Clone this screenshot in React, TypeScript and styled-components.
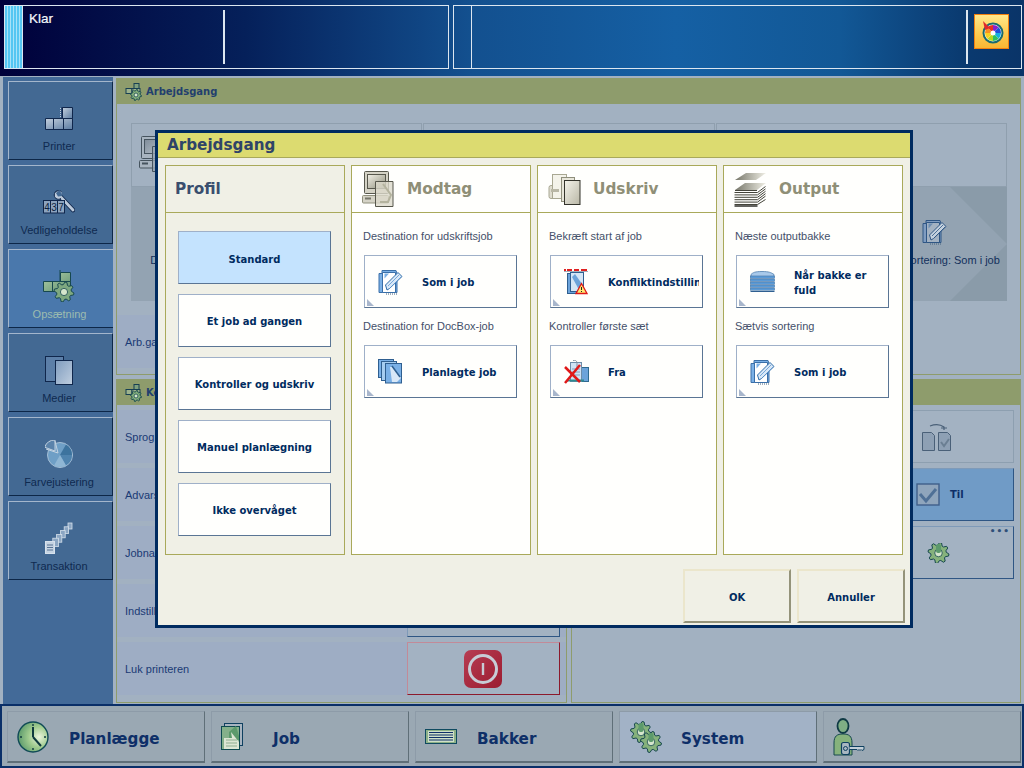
import React from "react";
import styled, {createGlobalStyle} from "styled-components";

const GlobalStyle = createGlobalStyle`
	html, body {
		margin: 0;
		padding: 0;
		background: #a2b1c1;
	}
	* {
		box-sizing: border-box;
	}
`

const REGULAR = `"Liberation Sans", Arial, sans-serif`
const BOLD = `"DejaVu Sans", Verdana, sans-serif`

const Screen = styled.div`
	position: relative;
	width: 1024px;
	height: 768px;
	overflow: hidden;
	display: flex;
	flex-direction: column;
	background: #a2b1c1;
	font-family: ${REGULAR};
`

/* top status bar */
const TopBar = styled.div`
	height: 76px;
	flex: none;
	display: flex;
	gap: 4px;
	padding: 5px 2px 7px 4px;
	background: linear-gradient(90deg, #00003a 0%, #05205a 24%, #13508f 46%, #1560a4 66%, #125896 82%, #0a3a70 94%, #0a3468 100%);
`
const StatusBox = styled.div<{$width: number}>`
	width: ${props => props.$width}px;
	display: flex;
	align-items: stretch;
	border: 1px solid #dce6f0;
`
const Stripe = styled.div`
	width: 18px;
	flex: none;
	background: repeating-linear-gradient(90deg, #55c6f2 0, #55c6f2 2px, #a8e2f8 2px, #a8e2f8 3px);
	border-right: 1px solid #dce6f0;
`
const StatusText = styled.div`
	width: 200px;
	flex: none;
	padding: 5px 0 0 6px;
	font-size: 13.5px;
	line-height: 16px;
	color: #f4f8fc;
	-webkit-text-stroke: 0.2px #f4f8fc;
`
const StatusDivider = styled.div`
	width: 2px;
	flex: none;
	margin: 4px 0;
	background: #dce6f0;
`
const StatusCell = styled.div`
	width: 18px;
	flex: none;
	border-right: 1px solid #dce6f0;
`
const StatusFill = styled.div`
	flex: 1;
`
const WheelButton = styled.div`
	width: 35px;
	height: 35px;
	margin: 8px 12px 0 6px;
	flex: none;
	display: flex;
	align-items: center;
	justify-content: center;
	border: 1px solid #f2800f;
	background: linear-gradient(180deg, #ffe88a 0%, #fdc94e 60%, #f9b634 100%);
`

/* main area */
const Main = styled.div`
	height: 628px;
	flex: none;
	display: flex;
	padding-left: 3px;
`
const Sidebar = styled.div`
	width: 110px;
	flex: none;
	margin-top: 1px;
	display: flex;
	flex-direction: column;
	gap: 5px;
	padding: 4px 0 0 5px;
	background: #436a98;
`
const SideButton = styled.div<{$active?: boolean}>`
	width: 105px;
	height: 79px;
	flex: none;
	display: flex;
	flex-direction: column;
	align-items: center;
	padding: 15px 3px 0 0;
	background: ${props => props.$active ? "#4a78ac" : "#436993"};
	border-top: 1px solid #a4b6cc;
	border-left: 1px solid #a4b6cc;
	border-bottom: 1px solid #0d2748;
	border-right: ${props => props.$active ? "0" : "1px solid #0d2748"};
`
const SideIcon = styled.div`
	height: 42px;
	display: flex;
	align-items: center;
	justify-content: center;
`
const SideLabel = styled.div<{$active?: boolean}>`
	font-size: 11px;
	line-height: 14px;
	color: ${props => props.$active ? "#9dbcaf" : "#0f2a50"};
`

const Content = styled.div`
	flex: 1;
	display: flex;
	flex-direction: column;
	gap: 4px;
	padding: 2px 3px 1px 3px;
`
const Panel = styled.div<{$height?: number}>`
	${props => props.$height ? `height: ${props.$height}px; flex: none;` : "flex: 1;"}
	min-width: 0;
	border: 1px solid #8e9c6c;
	display: flex;
	flex-direction: column;
`
const PanelHeader = styled.div`
	height: 25px;
	flex: none;
	display: flex;
	align-items: center;
	gap: 3px;
	padding-left: 8px;
	background: #8e9c6c;
	font-family: ${BOLD};
	font-weight: 700;
	font-size: 10px;
	color: #223f6e;
`
const CardRow = styled.div`
	display: flex;
	gap: 1px;
	margin: 19px 13px 0 14px;
`
const Card = styled.div`
	flex: 1;
	height: 178px;
	display: flex;
	flex-direction: column;
`
const CardTop = styled.div`
	height: 64px;
	flex: none;
	padding: 12px 0 0 7px;
	border: 1px solid #8f9fae;
`
const CardBottom = styled.div<{$arrow?: boolean}>`
	position: relative;
	flex: 1;
	display: grid;
	grid-template-columns: 1fr 1fr;
	background: #93a3b2;

	${props => props.$arrow ? `
	&::before {
		content: "";
		position: absolute;
		top: 0;
		right: 0;
		bottom: 0;
		width: 57px;
		background: #8a9ba9;
		clip-path: polygon(0 0, 100% 0, 100% 50%, 100% 100%, 0 100%, 100% 50%);
	}` : ""}
`
const CardItem = styled.div<{$col: number}>`
	position: relative;
	grid-column: ${props => props.$col};
	display: flex;
	flex-direction: column;
	align-items: center;
	padding-top: 32px;
	font-size: 11px;
	line-height: 14px;
	color: #12305c;
	white-space: nowrap;
`
const CardIcon = styled.div`
	height: 34px;
`
const WideRow = styled.div`
	width: 450px;
	height: 53px;
	margin-top: 14px;
	display: flex;
	align-items: center;
	padding-left: 8px;
	background: #9eadc4;
	font-size: 11px;
	color: #1a3a74;
`
const BottomRow = styled.div`
	flex: 1;
	display: flex;
	gap: 4px;
`
const Rows = styled.div`
	display: flex;
	flex-direction: column;
	gap: 5px;
	padding-top: 5px;
`
const SettingRow = styled.div`
	height: 53px;
	display: flex;
	align-items: center;
	justify-content: space-between;
	padding: 0 6px 0 8px;
	background: #9eadc4;
	font-size: 11px;
	color: #1a3a74;
`
const PlainRow = styled.div`
	height: 53px;
	display: flex;
	justify-content: flex-end;
	padding-right: 6px;
`
const Value = styled.div<{$kind?: "blue" | "red" | "dim", $pad?: number}>`
	position: relative;
	width: 153px;
	height: 53px;
	display: flex;
	align-items: center;
	justify-content: ${props => props.$kind === "red" ? "center" : "flex-start"};
	padding-left: ${props => props.$pad ?? 0}px;
	gap: 10px;
	font-family: ${BOLD};
	font-weight: 700;
	font-size: 10px;
	color: #0e2f68;
	background: ${props => props.$kind === "blue" ? "#709bc6" : "#a3b2c2"};
	border: 1px solid ${props => props.$kind === "red" ? "#c28a98" : props.$kind === "dim" ? "#8d9fb0" : "#7f9ab8"};
	border-right-color: ${props => props.$kind === "red" ? "#8c1a2c" : props.$kind === "dim" ? "#8d9fb0" : "#2f5684"};
	border-bottom-color: ${props => props.$kind === "red" ? "#8c1a2c" : props.$kind === "dim" ? "#8d9fb0" : "#2f5684"};
`
const Dots = styled.div`
	position: absolute;
	top: 2px;
	right: 3px;
	font-size: 9px;
	line-height: 4px;
	letter-spacing: 1px;
	color: #2f4f78;
`

/* bottom navigation */
const Nav = styled.div`
	height: 64px;
	flex: none;
	display: flex;
	gap: 6px;
	padding: 5px 1px 3px 5px;
	border: 2px solid #0a2f68;
	background: #9aa8b3;
`
const NavTab = styled.div<{$active?: boolean}>`
	width: 198px;
	height: 52px;
	flex: none;
	display: flex;
	align-items: center;
	padding-left: 9px;
	font-family: ${BOLD};
	font-weight: 700;
	font-size: 15.2px;
	color: #0e2f68;
	background: ${props => props.$active ? "#a2b2c6" : "#9aa8b3"};
	border: 1px solid #8d9ba8;
	border-right-color: #5f6f78;
	border-bottom: 2px solid #5f6f78;
`
const NavLabel = styled.span`
	padding-top: 4px;
`
const NavIcon = styled.div`
	width: 52px;
	flex: none;
	display: flex;
	align-items: center;
`

/* dialog */
const Dialog = styled.div`
	position: absolute;
	z-index: 2;
	left: 155px;
	top: 130px;
	width: 758px;
	height: 498px;
	border: 3px solid #002b60;
	background: #f0f0e6;
	display: flex;
	flex-direction: column;
`
const DialogTitle = styled.div`
	height: 25px;
	flex: none;
	padding-left: 9px;
	background: #dcdb70;
	border-bottom: 1px solid #a9a95a;
	font-family: ${BOLD};
	font-weight: 700;
	font-size: 15.2px;
	line-height: 24px;
	color: #2f4468;
`
const Columns = styled.div`
	display: flex;
	gap: 6px;
	padding: 7px 0 0 7px;
`
const Column = styled.div<{$tinted?: boolean}>`
	width: 180px;
	height: 390px;
	flex: none;
	border: 1px solid #a9a95a;
	background: ${props => props.$tinted ? "#f0f0e6" : "#fffffd"};
`
const ColumnHead = styled.div<{$tinted?: boolean}>`
	height: 47px;
	display: flex;
	align-items: center;
	padding-left: ${props => props.$tinted ? 9 : 10}px;
	border-bottom: 1px solid #a9a95a;
	font-family: ${BOLD};
	font-weight: 700;
	font-size: 15.3px;
	color: ${props => props.$tinted ? "#3a4e6e" : "#8f8f77"};
`
const HeadIcon = styled.div`
	width: 45px;
	flex: none;
	display: flex;
	align-items: center;
`
const ProfileList = styled.div`
	display: flex;
	flex-direction: column;
	gap: 10px;
	padding: 18px 0 0 12px;
`
const ProfileButton = styled.div<{$selected?: boolean}>`
	width: 153px;
	height: 53px;
	display: flex;
	align-items: center;
	justify-content: center;
	padding-top: ${props => props.$selected ? 4 : 2}px;
	font-family: ${BOLD};
	font-weight: 700;
	font-size: 10px;
	color: #002b60;
	background: ${props => props.$selected ? "#c4e3fe" : "#fffffd"};
	border: 1px solid #9fb0c8;
	border-right-color: #5a7594;
	border-bottom-color: #5a7594;
`
const Fields = styled.div`
	padding: 16px 0 0 11px;
`
const FieldLabel = styled.div`
	font-size: 11px;
	line-height: 14px;
	color: #44506a;
	margin-bottom: 12px;
`
const FieldButton = styled.div`
	position: relative;
	width: 153px;
	height: 53px;
	margin: 0 0 11px 1px;
	display: flex;
	align-items: center;
	padding-left: 13px;
	background: #fffffd;
	border: 1px solid #9fb0c8;
	border-right-color: #5a7594;
	border-bottom-color: #5a7594;

	&::after {
		content: "";
		position: absolute;
		left: 2px;
		bottom: 1px;
		width: 7px;
		height: 7px;
		background: #a8b6cc;
		clip-path: polygon(0 0, 100% 100%, 0 100%);
	}
`
const FieldIcon = styled.div`
	width: 44px;
	flex: none;
	display: flex;
	align-items: center;
`
const FieldValue = styled.div`
	width: 91px;
	flex: none;
	overflow: hidden;
	padding-top: 2px;
	font-family: ${BOLD};
	font-weight: 700;
	font-size: 10px;
	line-height: 15px;
	color: #002b60;
`
const Footer = styled.div`
	display: flex;
	justify-content: flex-end;
	gap: 6px;
	padding: 14px 5px 0 0;
`
const FooterButton = styled.div`
	width: 108px;
	height: 54px;
	display: flex;
	align-items: center;
	justify-content: center;
	padding-top: 2px;
	font-family: ${BOLD};
	font-weight: 700;
	font-size: 10px;
	color: #002b60;
	background: #f0f0e6;
	border: 2px solid #ebe6cc;
	border-right-color: #94937a;
	border-bottom-color: #94937a;
`

/* icon helpers */
const gearPath = (cx: number, cy: number, r: number, teeth: number) => {
	const points: string[] = []
	const steps = teeth * 4
	for (let i = 0; i < steps; i++) {
		const angle = (i + 0.5) / steps * Math.PI * 2
		const radius = i % 4 < 2 ? r : r * 0.74
		points.push(`${(cx + Math.cos(angle) * radius).toFixed(2)} ${(cy + Math.sin(angle) * radius).toFixed(2)}`)
	}
	return `M${points.join("L")}Z`
}
const wedge = (cx: number, cy: number, r: number, from: number, to: number) => {
	const a = (from - 90) * Math.PI / 180
	const b = (to - 90) * Math.PI / 180
	return `M${cx} ${cy}L${(cx + Math.cos(a) * r).toFixed(2)} ${(cy + Math.sin(a) * r).toFixed(2)}A${r} ${r} 0 0 1 ${(cx + Math.cos(b) * r).toFixed(2)} ${(cy + Math.sin(b) * r).toFixed(2)}Z`
}

const Gear = ({cx, cy, r, fill = "#86b27c", stroke = "#17484f"}: {cx: number, cy: number, r: number, fill?: string, stroke?: string}) => (
	<g>
		<path d={gearPath(cx, cy, r, 8)} fill={fill} stroke={stroke} strokeWidth="1"/>
		<circle cx={cx} cy={cy} r={r * 0.36} fill="#d6e6cc" stroke={stroke} strokeWidth="0.8"/>
	</g>
)

const WorkflowIcon = () => (
	<svg width="18" height="18" viewBox="0 0 18 18">
		<rect x="9" y="0.5" width="5" height="5" fill="#7fa07e" stroke="#173f52"/>
		<rect x="1" y="5.5" width="6" height="5" fill="#9db28c" stroke="#173f52"/>
		<rect x="7" y="5.5" width="8" height="5" fill="#9db28c" stroke="#173f52"/>
		<Gear cx={11} cy={12} r={5.5}/>
	</svg>
)
const PrinterIcon = () => (
	<svg width="28" height="23" viewBox="0 0 28 23">
		<defs>
			<linearGradient id="pblock" x1="0" y1="0" x2="1" y2="1">
				<stop offset="0" stopColor="#c4d0de"/>
				<stop offset="1" stopColor="#5c7ca2"/>
			</linearGradient>
		</defs>
		<path d="M0.5 11.5h27v11h-27z" fill="url(#pblock)" stroke="#10274c"/>
		<path d="M17.5 0.5h10v11h-10z" fill="url(#pblock)" stroke="#10274c"/>
		<path d="M8.5 11.5v11M18.5 11.5v11M17 0v11" stroke="#10274c" fill="none"/>
		<path d="M15.5 1v9" stroke="#c4d0de" strokeDasharray="1 1"/>
	</svg>
)
const MaintenanceIcon = () => (
	<svg width="32" height="24" viewBox="0 0 32 24">
		<path d="M14 3L30 20" stroke="#10274c" strokeWidth="4.600" strokeLinecap="round"/>
		<path d="M14 3L30 20" stroke="#bccadb" strokeWidth="2.800" strokeLinecap="round"/>
		<path d="M18.500 1.500c-2.500-1.500-6-.5-7 2-.7 2 0 4 1.500 5 1.500 1 3.500 1 5 0" fill="#bccadb" stroke="#10274c" strokeWidth="1"/>
		<path d="M17 0l-4 3 2 3.500 4-.5z" fill="#436993"/>
		<rect x="0.500" y="10.500" width="21" height="12.500" fill="#8da4bf" stroke="#10274c"/>
		<path d="M7.500 10.500v12.500M14.500 10.500v12.500" stroke="#10274c"/>
		<text x="1.300" y="20.500" fontFamily={REGULAR} fontSize="10" fill="#0b1f40">4</text>
		<text x="8.300" y="20.500" fontFamily={REGULAR} fontSize="10" fill="#0b1f40">3</text>
		<text x="15.300" y="20.500" fontFamily={REGULAR} fontSize="10" fill="#0b1f40">7</text>
	</svg>
)
const SetupIcon = () => (
	<svg width="33" height="32" viewBox="0 0 33 32">
		<defs>
			<linearGradient id="sblock" x1="0" y1="0" x2="1" y2="1">
				<stop offset="0" stopColor="#b4d0a8"/>
				<stop offset="1" stopColor="#5d9070"/>
			</linearGradient>
		</defs>
		<path d="M0.500 11.500h27v10h-27zM17.500 2.500h10v9h-10z" fill="url(#sblock)" stroke="#17484f"/>
		<path d="M17 0v12M9.500 11.500v10" stroke="#17484f"/>
		<Gear cx={21} cy={22} r={10} fill="#7ea880"/>
	</svg>
)
const MediaIcon = () => (
	<svg width="29" height="29" viewBox="0 0 29 29">
		<defs>
			<linearGradient id="mblock" x1="0" y1="0" x2="1" y2="1">
				<stop offset="0" stopColor="#7f9cbe"/>
				<stop offset="1" stopColor="#c0cfe0"/>
			</linearGradient>
		</defs>
		<rect x="0.500" y="0.500" width="18" height="25" fill="#5c7fa8" stroke="#10274c"/>
		<rect x="10.500" y="4.500" width="17" height="24" fill="url(#mblock)" stroke="#10274c"/>
	</svg>
)
const AdjustIcon = () => (
	<svg width="28" height="28" viewBox="0 0 28 28">
		<circle cx="15" cy="15" r="12.500" fill="#6f9fc6" stroke="#a6bfd6"/>
		<path d={wedge(15, 15, 12, 90, 150)} fill="#4f83ae"/>
		<path d={wedge(15, 15, 12, 150, 210)} fill="#8fb6d4"/>
		<path d={wedge(15, 15, 12, 30, 90)} fill="#3d739e"/>
		<path d={wedge(11, 12, 11, 290, 360)} transform="translate(-1 -1)" fill="#5b83ab" stroke="#c3d2e0"/>
		<path d="M13 13L1 9M13 13L10 1" stroke="#c3d2e0" fill="none"/>
	</svg>
)
const TransactionIcon = () => (
	<svg width="28" height="32" viewBox="0 0 28 32">
		{[0, 1, 2, 3, 4].map(i => (
			<rect key={i} x={23 - i * 3.8} y={1 + i * 3.8} width={4 + i * 0.4} height={6 + i * 0.6} fill="#8ba6c3" stroke="#d6e1ec" strokeWidth="0.8"/>
		))}
		<rect x="0.500" y="19.500" width="9" height="12" fill="#c5d3e2" stroke="#d6e1ec"/>
		<path d="M2 23h6M2 25.500h6M2 28h6" stroke="#3b5a80" strokeWidth="0.8"/>
	</svg>
)
const PcIcon = ({dim}: {dim?: boolean}) => (
	<svg width="33" height="36" viewBox="0 0 33 36">
		<defs>
			<linearGradient id={dim ? "pcd" : "pc"} x1="0" y1="0" x2="1" y2="1">
				<stop offset="0" stopColor={dim ? "#7f8c99" : "#f2f0e6"}/>
				<stop offset="1" stopColor={dim ? "#b5c0ca" : "#8f8f7c"}/>
			</linearGradient>
		</defs>
		<rect x="2.500" y="0.500" width="24" height="22" rx="1" fill={dim ? "#a8b4c0" : "#d5d3c6"} stroke={dim ? "#46545f" : "#57574c"}/>
		<rect x="5.500" y="3.500" width="18" height="14" fill={`url(#${dim ? "pcd" : "pc"})`} stroke={dim ? "#46545f" : "#57574c"}/>
		<rect x="0.500" y="24.500" width="26" height="7.500" rx="1" fill={dim ? "#a8b4c0" : "#d5d3c6"} stroke={dim ? "#46545f" : "#8f8f7c"}/>
		<rect x="3" y="26.500" width="6" height="2" fill={dim ? "#46545f" : "#77776a"}/>
		<path d="M13.500 10.500h17.500v25h-17.500z" fill={dim ? "#97a5b2" : "#dcdaca"} fillOpacity="0.8" stroke={dim ? "#46545f" : "#57574c"}/>
		<path d="M21 13l8 11-3 7h-8" fill="none" stroke={dim ? "#7c8a96" : "#b4b39e"} strokeWidth="2"/>
	</svg>
)
const PrintIcon = () => (
	<svg width="33" height="31" viewBox="0 0 33 31">
		<defs>
			<linearGradient id="prn" x1="0" y1="0" x2="1" y2="1">
				<stop offset="0" stopColor="#f4f3ea"/>
				<stop offset="1" stopColor="#b9b7a6"/>
			</linearGradient>
		</defs>
		<rect x="1" y="11.500" width="14" height="13" rx="2" fill="#dfddd0" stroke="#a9a893"/>
		<rect x="4.500" y="0.500" width="14" height="24" fill="#f4f3ea" stroke="#a9a893"/>
		<rect x="13.500" y="3.500" width="13" height="24" fill="#e8e6da" stroke="#8f8f7c"/>
		<rect x="16.500" y="6.500" width="15.500" height="24" fill="url(#prn)" stroke="#33332b"/>
		<rect x="3" y="15" width="8" height="3" fill="#b9b7a6"/>
	</svg>
)
const OutputIcon = () => (
	<svg width="33" height="35" viewBox="0 0 33 35">
		<defs>
			<linearGradient id="outp" x1="0" y1="0" x2="1" y2="0">
				<stop offset="0" stopColor="#77776a"/>
				<stop offset="1" stopColor="#f0efe5"/>
			</linearGradient>
		</defs>
		<path d="M1 8L12 1h20L22 8z" fill="url(#outp)"/>
		<path d="M1 18l10-7h21l-9 7z" fill="url(#outp)"/>
		<path d="M1 18.500h22" stroke="#44443a"/>
		{[0, 1, 2, 3, 4, 5].map(i => (
			<path key={i} d={`M0.500 ${20.500 + i * 2.400}h23l8-${i === 5 ? 5 : 6}`} fill="none" stroke="#44443a" strokeWidth="1"/>
		))}
		<path d="M0.500 34h23" stroke="#22221c" strokeWidth="1.400"/>
	</svg>
)
const PencilDoc = ({dim}: {dim?: boolean}) => (
	<svg width="25" height="26" viewBox="0 0 25 26">
		<path d="M1 4.500h3V1.500h14l1 3v19H1z" fill={dim ? "#7f9cc0" : "#7ab0e6"} stroke={dim ? "#2f5684" : "#3a6fa8"}/>
		<path d="M4.500 3.500h13v20h-13z" fill={dim ? "#a3b2c2" : "#ffffff"} stroke={dim ? "#2f5684" : "#3a6fa8"}/>
		<path d="M6.500 4.500l4.500 0-4.500 5z" fill={dim ? "#6c8db2" : "#7ab0e6"}/>
		<path d="M9 21l-1.500-5L20 3.500l4 4L11.500 19.500z" fill={dim ? "#c3d0dd" : "#d8e8f8"} stroke={dim ? "#2f5684" : "#2f6ca8"}/>
		<path d="M10 17l11-11M12 19l11-11" stroke={dim ? "#2f5684" : "#5f97cf"} strokeWidth="0.8"/>
		<path d="M8 25h12" stroke="#40607f" strokeDasharray="1 1"/>
	</svg>
)
const StackDocs = () => (
	<svg width="25" height="25" viewBox="0 0 25 25">
		<rect x="0.500" y="0.500" width="15" height="18" fill="#7ab0e6" stroke="#2f5f90"/>
		<rect x="3.500" y="2.500" width="15" height="19" fill="#a6cdf0" stroke="#2f5f90"/>
		<rect x="7.500" y="4.500" width="16" height="19.500" fill="#7ab0e6" stroke="#2f5f90"/>
		<path d="M12 8l2 0 9 11-4 4h-5z" fill="#d8e8f8"/>
		<path d="M14 7l8 11" stroke="#2f5f90" strokeWidth="1.500"/>
	</svg>
)
const ConflictIcon = () => (
	<svg width="24" height="26" viewBox="0 0 24 26">
		<path d="M0 1h2M3 1h5M10 1h5M17 1h6" stroke="#e02020" strokeWidth="2"/>
		<path d="M0 2.500h24" stroke="#8c9aa8" strokeWidth="0.800"/>
		<rect x="3.500" y="4.500" width="13" height="20" fill="#6ca3da" stroke="#2f5f90"/>
		<rect x="6.500" y="3.500" width="13" height="19" fill="#d5e6f6" stroke="#2f5f90"/>
		<path d="M8 8l3-3 7 10-1 4h-3z" fill="#6ca3da"/>
		<path d="M17.500 14.500l5.500 10h-11z" fill="#ffe870" stroke="#e01818" strokeWidth="1.300"/>
		<path d="M17.500 18v3M17.500 22v1" stroke="#222" strokeWidth="1"/>
	</svg>
)
const OffIcon = () => (
	<svg width="25" height="24" viewBox="0 0 25 24">
		<rect x="14.500" y="7.500" width="10" height="14" fill="#6ca3da" stroke="#2f6a90"/>
		<rect x="6.500" y="2.500" width="11" height="19" fill="#cfe2f4" stroke="#6d8ca8"/>
		<path d="M3 20.500h17" stroke="#2f8a90" strokeWidth="2"/>
		<path d="M8 9h8M8 12h8M8 15h8" stroke="#7f9fbe"/>
		<path d="M9 0.500c3-1 4 1 4 3v4" fill="none" stroke="#7f8f9f"/>
		<path d="M1 7l15 15M16 5L1 23" stroke="#e01818" strokeWidth="2.500"/>
	</svg>
)
const TrayIcon = () => (
	<svg width="25" height="21" viewBox="0 0 25 21">
		<path d="M1 3.500c2-2 4-3 11-3s9 1 12 3v2H1z" fill="#a8c9ea" stroke="#4f7fae" strokeWidth="0.800"/>
		{[5, 8, 11, 14, 17].map(y => (
			<rect key={y} x="0.500" y={y} width="24" height="2.200" fill="#5f9fdc" stroke="#3f6f9e" strokeWidth="0.600"/>
		))}
		<path d="M0.500 20.500h24" stroke="#2f5f90"/>
	</svg>
)
const Clock = () => (
	<svg width="32" height="32" viewBox="0 0 32 32">
		<defs>
			<radialGradient id="clk" cx="0.700" cy="0.500" r="0.700">
				<stop offset="0" stopColor="#eaf4dc"/>
				<stop offset="0.500" stopColor="#9fcb8e"/>
				<stop offset="1" stopColor="#5c9a6c"/>
			</radialGradient>
		</defs>
		<circle cx="16" cy="16" r="15" fill="url(#clk)" stroke="#0f4a56" strokeWidth="1.400"/>
		<path d="M16 16V6M16 16l8 9" stroke="#0f3a3e" strokeWidth="2"/>
		<path d="M16 3v2M16 27v2M3 16h2M27 16h2" stroke="#0f3a3e" strokeWidth="1.400"/>
	</svg>
)
const JobIcon = () => (
	<svg width="22" height="27" viewBox="0 0 22 27">
		<rect x="3.500" y="0.500" width="18" height="22" fill="#a8b4c0" stroke="#0f4060"/>
		<rect x="0.500" y="3.500" width="18" height="23" fill="#84b08a" stroke="#0f4a50"/>
		<path d="M8 9l7-6 3 10v4H8z" fill="#5c9a6c"/>
		<path d="M10 9l8 10v7H3V15h8z" fill="#dde6d4"/>
		<path d="M5 17h11M5 20h11M5 23h11" stroke="#8fae90"/>
	</svg>
)
const NavTrayIcon = () => (
	<svg width="32" height="17" viewBox="0 0 32 17">
		<rect x="0.500" y="1.500" width="31" height="14" fill="#8cb088" stroke="#0f4a60"/>
		<rect x="3" y="3" width="26" height="11" fill="#cfe0c8"/>
		<path d="M4 4.500h24M4 7h24M4 9.500h24M4 12h24" stroke="#0e2f68" strokeWidth="1.200"/>
	</svg>
)
const GearsIcon = () => (
	<svg width="34" height="32" viewBox="0 0 34 32">
		<Gear cx={12} cy={11} r={10.500}/>
		<Gear cx={22} cy={21} r={10.500}/>
		<rect x="9.500" y="2" width="5" height="9" rx="2" fill="#5c9a6c"/>
		<rect x="19.500" y="12" width="5" height="9" rx="2" fill="#5c9a6c"/>
	</svg>
)
const UserKeyIcon = () => (
	<svg width="32" height="38" viewBox="0 0 32 38">
		<ellipse cx="10" cy="8" rx="5.500" ry="7" fill="#7fae84" stroke="#0f3a44" strokeWidth="1.800"/>
		<path d="M1 25c0-7 3-9 9-9s9 2 9 9v12H1z" fill="#86b27c" stroke="#17484f"/>
		<rect x="8.500" y="24.500" width="8" height="12" rx="2" fill="#a9b7c1" stroke="#0f4060" strokeWidth="1.200"/>
		<circle cx="12.500" cy="30.500" r="2" fill="none" stroke="#0f4060"/>
		<path d="M16.500 28.500h14.500v3l-2 1-1-1-1 1-1-1-1 1-1-1h-7.500" fill="#c4d0d8" stroke="#0f4060"/>
	</svg>
)
const PowerIcon = () => (
	<svg width="38" height="38" viewBox="0 0 38 38">
		<defs>
			<linearGradient id="pow" x1="0" y1="0" x2="1" y2="1">
				<stop offset="0" stopColor="#b73c52"/>
				<stop offset="1" stopColor="#9b1c30"/>
			</linearGradient>
		</defs>
		<rect x="0" y="0" width="38" height="38" rx="7" fill="url(#pow)"/>
		<circle cx="19" cy="19" r="13.500" fill="none" stroke="#c7ccd6" strokeWidth="3"/>
		<path d="M19 13v12" stroke="#c7ccd6" strokeWidth="2.400"/>
	</svg>
)
const WheelIcon = () => {
	const colors = ["#8a20c8", "#2050d8", "#18b0e0", "#30c060", "#b8d820", "#f8d020", "#f89020", "#e83020"]
	return (
		<svg width="24" height="24" viewBox="0 0 24 24">
			<circle cx="13" cy="13" r="9.500" fill="#fff" stroke="#1a6a70" strokeWidth="2"/>
			{colors.map((color, i) => (
				<path key={color} d={wedge(13, 13, 8, i * 45, (i + 1) * 45)} fill={color}/>
			))}
			<circle cx="13" cy="13" r="2.500" fill="#fff"/>
			<path d="M3 1l7 7-5 2z" fill="#e0282c"/>
		</svg>
	)
}
const DuplexIcon = () => (
	<svg width="30" height="28" viewBox="0 0 30 28">
		<path d="M0.500 9.500h9l3 3v15h-12zM16.500 9.500h9l3 3v15h-12z" fill="#8ea0b4" stroke="#4a6078"/>
		<path d="M19 19l3 4 5-7" fill="none" stroke="#6b7f93" strokeWidth="2"/>
		<path d="M8 3c5-2 10-2 14 1v3M19 5h6" fill="none" stroke="#4a6078" strokeWidth="1.200"/>
	</svg>
)
const CheckIcon = () => (
	<svg width="24" height="23" viewBox="0 0 24 23">
		<rect x="1" y="1" width="22" height="21" fill="#8fa5bc" stroke="#3f5f8a" strokeWidth="1.400"/>
		<path d="M4 11l6 7 10-12" fill="none" stroke="#4f7096" strokeWidth="3"/>
	</svg>
)
const SmallGear = () => (
	<svg width="23" height="20" viewBox="0 0 23 20">
		<Gear cx={11.500} cy={10} r={10.500}/>
		<rect x="9" y="1" width="5" height="9" rx="2" fill="#5c9a6c"/>
	</svg>
)

const sideButtons = [
	{label: "Printer", icon: <PrinterIcon/>},
	{label: "Vedligeholdelse", icon: <MaintenanceIcon/>},
	{label: "Opsætning", icon: <SetupIcon/>, active: true},
	{label: "Medier", icon: <MediaIcon/>},
	{label: "Farvejustering", icon: <AdjustIcon/>},
	{label: "Transaktion", icon: <TransactionIcon/>},
]

const profiles = ["Standard", "Et job ad gangen", "Kontroller og udskriv", "Manuel planlægning", "Ikke overvåget"]

const columns = [
	{
		title: "Modtag",
		icon: <PcIcon/>,
		fields: [
			{label: "Destination for udskriftsjob", value: "Som i job", icon: <PencilDoc/>},
			{label: "Destination for DocBox-job", value: "Planlagte job", icon: <StackDocs/>},
		],
	},
	{
		title: "Udskriv",
		icon: <PrintIcon/>,
		fields: [
			{label: "Bekræft start af job", value: "Konfliktindstillinger", icon: <ConflictIcon/>},
			{label: "Kontroller første sæt", value: "Fra", icon: <OffIcon/>},
		],
	},
	{
		title: "Output",
		icon: <OutputIcon/>,
		fields: [
			{label: "Næste outputbakke", value: "Når bakke er fuld", icon: <TrayIcon/>},
			{label: "Sætvis sortering", value: "Som i job", icon: <PencilDoc/>},
		],
	},
]

const navTabs = [
	{label: "Planlægge", icon: <Clock/>},
	{label: "Job", icon: <JobIcon/>},
	{label: "Bakker", icon: <NavTrayIcon/>},
	{label: "System", icon: <GearsIcon/>, active: true},
	{label: "", icon: <UserKeyIcon/>},
]

export default function App() {
	return (
		<Screen>
			<GlobalStyle/>
			<TopBar>
				<StatusBox $width={445}>
					<Stripe/>
					<StatusText>Klar</StatusText>
					<StatusDivider/>
				</StatusBox>
				<StatusBox $width={569}>
					<StatusCell/>
					<StatusFill/>
					<StatusDivider/>
					<WheelButton><WheelIcon/></WheelButton>
				</StatusBox>
			</TopBar>

			<Main>
				<Sidebar>
					{sideButtons.map(item => (
						<SideButton key={item.label} $active={item.active}>
							<SideIcon>{item.icon}</SideIcon>
							<SideLabel $active={item.active}>{item.label}</SideLabel>
						</SideButton>
					))}
				</Sidebar>
				<Content>
					<Panel $height={297}>
						<PanelHeader><WorkflowIcon/>Arbejdsgang</PanelHeader>
						<CardRow>
							<Card>
								<CardTop><PcIcon dim/></CardTop>
								<CardBottom>
									<CardItem $col={1}>
										<CardIcon/>
										Destination: Som i job
									</CardItem>
								</CardBottom>
							</Card>
							<Card>
								<CardTop/>
								<CardBottom/>
							</Card>
							<Card>
								<CardTop/>
								<CardBottom $arrow>
									<CardItem $col={2}>
										<CardIcon><PencilDoc dim/></CardIcon>
										Sætvis sortering: Som i job
									</CardItem>
								</CardBottom>
							</Card>
						</CardRow>
						<WideRow>Arb.gang</WideRow>
					</Panel>
					<BottomRow>
						<Panel>
							<PanelHeader><WorkflowIcon/>Konfiguration</PanelHeader>
							<Rows>
								<SettingRow>Sprog<Value/></SettingRow>
								<SettingRow>Advarsler<Value/></SettingRow>
								<SettingRow>Jobnavn<Value/></SettingRow>
								<SettingRow>Indstillinger<Value/></SettingRow>
								<SettingRow>Luk printeren<Value $kind="red"><PowerIcon/></Value></SettingRow>
							</Rows>
						</Panel>
						<Panel>
							<PanelHeader/>
							<Rows>
								<PlainRow><Value $kind="dim" $pad={60}><DuplexIcon/></Value></PlainRow>
								<PlainRow><Value $kind="blue" $pad={54}><CheckIcon/>Til</Value></PlainRow>
								<PlainRow><Value $pad={65}><SmallGear/><Dots>•••</Dots></Value></PlainRow>
							</Rows>
						</Panel>
					</BottomRow>
				</Content>
			</Main>

			<Nav>
				{navTabs.map(tab => (
					<NavTab key={tab.label || "login"} $active={tab.active}>
						<NavIcon>{tab.icon}</NavIcon>
						{tab.label && <NavLabel>{tab.label}</NavLabel>}
					</NavTab>
				))}
			</Nav>

			<Dialog>
				<DialogTitle>Arbejdsgang</DialogTitle>
				<Columns>
					<Column $tinted>
						<ColumnHead $tinted>Profil</ColumnHead>
						<ProfileList>
							{profiles.map((profile, index) => (
								<ProfileButton key={profile} $selected={index === 0}>{profile}</ProfileButton>
							))}
						</ProfileList>
					</Column>
					{columns.map(column => (
						<Column key={column.title}>
							<ColumnHead>
								<HeadIcon>{column.icon}</HeadIcon>
								{column.title}
							</ColumnHead>
							<Fields>
								{column.fields.map(field => (
									<React.Fragment key={field.label}>
										<FieldLabel>{field.label}</FieldLabel>
										<FieldButton>
											<FieldIcon>{field.icon}</FieldIcon>
											<FieldValue>{field.value}</FieldValue>
										</FieldButton>
									</React.Fragment>
								))}
							</Fields>
						</Column>
					))}
				</Columns>
				<Footer>
					<FooterButton>OK</FooterButton>
					<FooterButton>Annuller</FooterButton>
				</Footer>
			</Dialog>
		</Screen>
	)
}
